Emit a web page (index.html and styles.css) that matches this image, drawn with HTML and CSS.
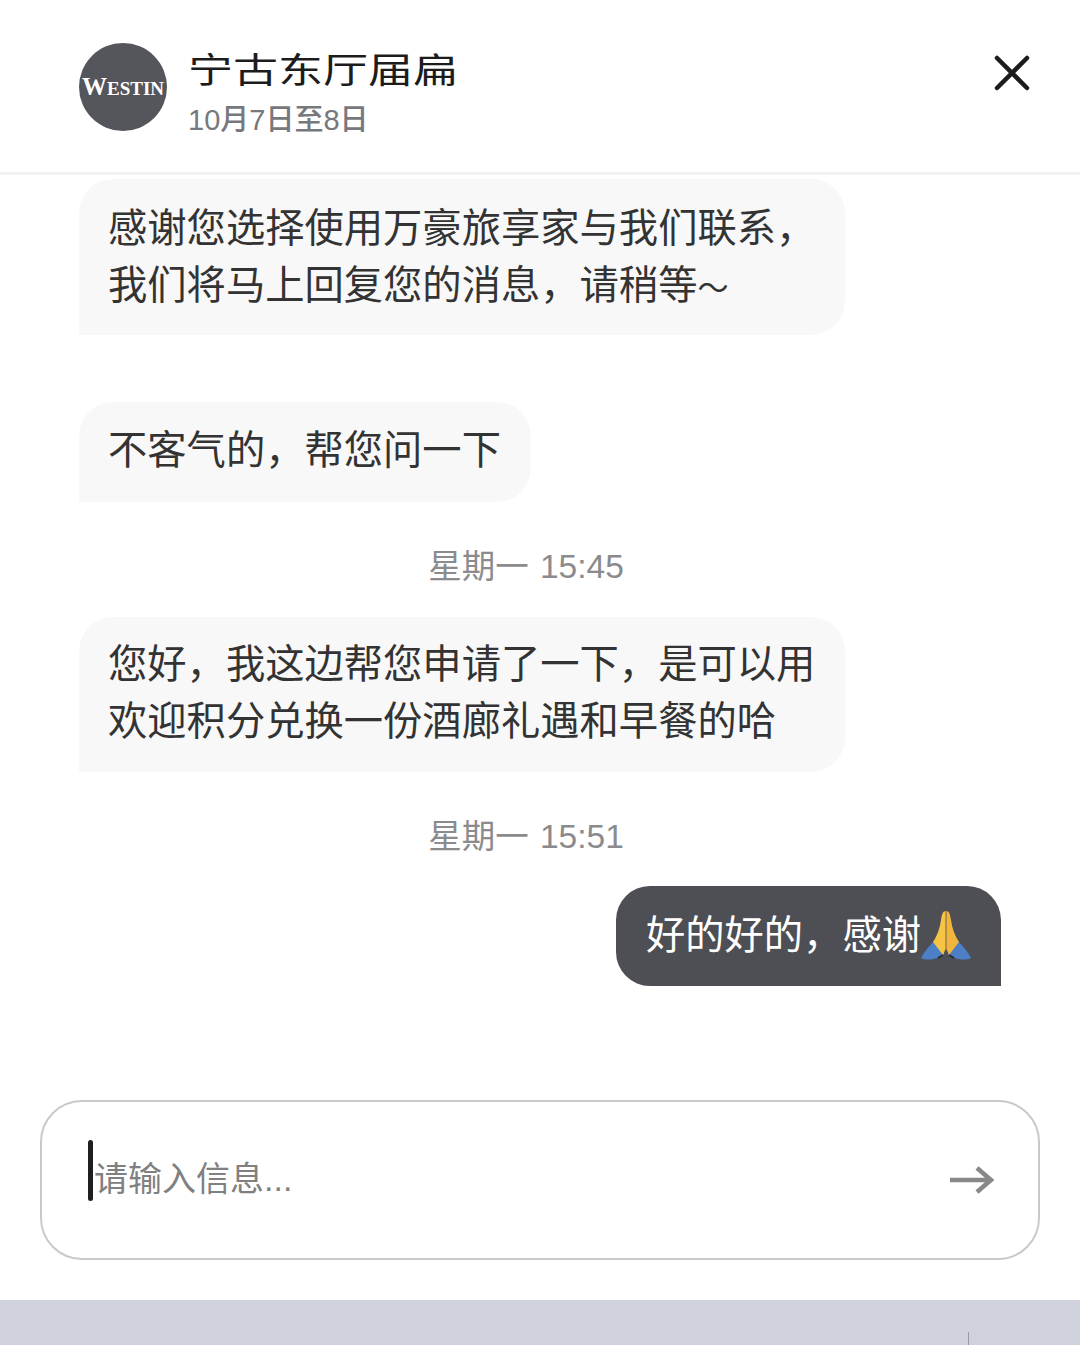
FILE: index.html
```html
<!DOCTYPE html>
<html lang="zh-CN">
<head>
	<meta charset="UTF-8">
	<title>聊天</title>
	<link rel="stylesheet" href="styles.css">
</head>
<body>
<div class="page">
	<div class="head">
		<div class="logo"><span class="logo_b">W</span>ESTIN</div>
		<div class="info">
			<p class="name">宁古东厅届扁</p>
			<p class="date">10月7日至8日</p>
		</div>
		<svg class="close" viewBox="0 0 36 36"><path d="M3 3L33 33M33 3L3 33" fill="none" stroke="#1c1c1e" stroke-width="4.5" stroke-linecap="round"/></svg>
	</div>

	<div class="chat">
		<div class="msg first">感谢您选择使用万豪旅享家与我们联系，<br>我们将马上回复您的消息，请稍等<span class="tilde">～</span></div>
		<div class="msg second">不客气的，帮您问一下</div>
		<p class="time">星期一 15:45</p>
		<div class="msg">您好，我这边帮您申请了一下，是可以用<br>欢迎积分兑换一份酒廊礼遇和早餐的哈</div>
		<p class="time time2">星期一 15:51</p>
		<div class="msg mine">好的好的，感谢<svg class="pray" viewBox="0 0 54 54">
			<path d="M2 50C5 44 10 38 15 33L25 46C23 49 21 50 18 50C12 52 6 52 2 50Z" fill="#4c7fc6"/>
			<path d="M52 50C49 44 44 38 39 33L29 46C31 49 33 50 36 50C42 52 48 52 52 50Z" fill="#4c7fc6"/>
			<path d="M26.6 3C24 3 23 6 22 12C21 20 18 28 14 34L24 47L26.6 41Z" fill="#f6c445"/>
			<path d="M27.4 3C30 3 31 6 32 12C33 20 36 28 40 34L30 47L27.4 41Z" fill="#f2b53c"/>
			<path d="M19 50L24 47M35 50L30 47" fill="none" stroke="#2b2b2b" stroke-width="2"/>
		</svg></div>
	</div>

	<div class="input">
		<span class="cursor"></span>
		<span class="hint">请输入信息...</span>
		<svg class="send" viewBox="0 0 46 30"><path d="M1 15H42M28 3L42 15L28 27" fill="none" stroke="#888" stroke-width="4.5"/></svg>
	</div>

	<div class="keyboard"><span class="kb_line"></span></div>
</div>
</body>
</html>
```

FILE: styles.css
```css
*{padding:0;margin:0;box-sizing:border-box;}
html,body{
	background:#fff;
}
.page{
	width:1080px;
	height:1345px;
	overflow:hidden;
	display:flex;
	flex-direction:column;
	font-family:"Liberation Sans","Noto Sans CJK SC",sans-serif;
}
/*顶部*/
.head{
	height:175px;
	flex:none;
	display:flex;
	align-items:flex-start;
	padding:43px 50px 0 79px;
	border-bottom:3px solid #f2f2f2;
}
.logo{
	width:88px;
	height:88px;
	flex:none;
	border-radius:50%;
	background:#55565b;
	color:#fff;
	font-family:"Liberation Serif",serif;
	font-size:19px;
	font-weight:bold;
	line-height:88px;
	text-align:center;
	white-space:nowrap;
}
.logo_b{
	font-size:25px;
}
.info{
	margin-left:21px;
	flex:1;
}
.name{
	font-size:45px;
	line-height:50px;
	height:50px;
	color:#1c1c1c;
	transform:scaleY(.78);
	transform-origin:0 0;
	margin-top:9px;
}
.date{
	font-size:29px;
	font-weight:500;
	line-height:40px;
	color:#77787c;
	margin-top:-2px;
}
.close{
	width:36px;
	height:36px;
	margin-top:12px;
}
/*消息*/
.chat{
	flex:1;
	padding:4px 79px 0;
	display:flex;
	flex-direction:column;
	align-items:flex-start;
}
.msg{
	padding:19px 30px 23px 29px;
	font-size:39.3px;
	line-height:56.5px;
	color:#333;
	background:#f8f8f8;
	border-radius:34px 34px 34px 0;
	white-space:nowrap;
}
.first{
	padding-top:21px;
	padding-bottom:22px;
}
.tilde{
	font-size:31px;
	line-height:0;
}
.second{
	margin-top:67px;
	padding-top:20px;
	padding-bottom:23.5px;
}
.time{
	align-self:stretch;
	text-align:center;
	font-size:33.5px;
	word-spacing:2px;
	line-height:40px;
	color:#8b8b8d;
	margin:45px 28px 30px 0;
}
.time2{
	margin-bottom:29px;
}
.mine{
	align-self:flex-end;
	display:flex;
	align-items:center;
	background:#4d4f55;
	color:#fff;
	border-radius:34px 34px 0 34px;
	height:100px;
	padding:0 28px 2px 30px;
}
.pray{
	width:54px;
	height:54px;
	margin-left:-2px;
}
/*输入框*/
.input{
	height:160px;
	flex:none;
	margin:0 40px 40px;
	border:2px solid #c9c9c9;
	border-radius:42px;
	display:flex;
	align-items:center;
	padding:0 43px 0 46px;
	position:relative;
}
.cursor{
	width:5px;
	height:61px;
	border-radius:3px;
	background:#1f1f1f;
	margin-top:-19px;
}
.hint{
	flex:1;
	font-size:34px;
	color:#808080;
	margin:-7px 0 0 1px;
}
.send{
	width:46px;
	height:30px;
}
.keyboard{
	height:45px;
	flex:none;
	background:#cfd2dc;
	position:relative;
}
.kb_line{
	position:absolute;
	left:968px;
	top:32px;
	width:1px;
	height:13px;
	background:#9a9ca3;
}
```
